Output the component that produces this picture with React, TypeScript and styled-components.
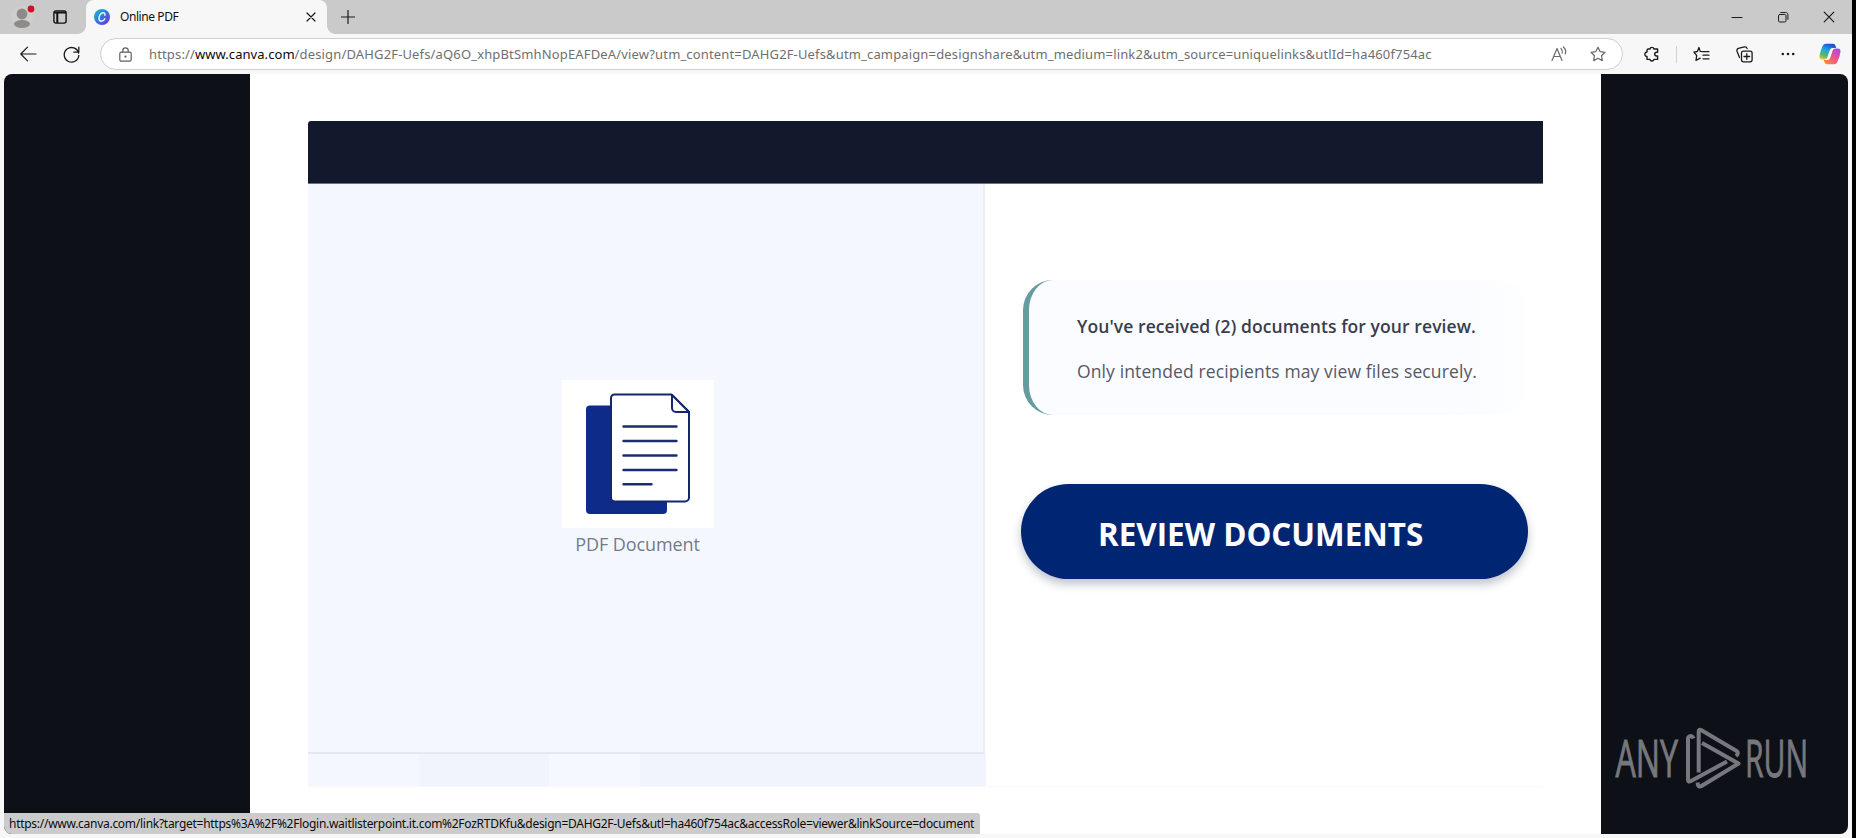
import React from "react";
import styled, { createGlobalStyle } from "styled-components";

const GlobalStyle = createGlobalStyle`
  * { box-sizing: border-box; }
  body { margin: 0; background: #000; overflow: hidden; font-family: "Noto Sans", "Open Sans", sans-serif; }
  svg { display: block; flex: none; }
`;

const Desktop = styled.div`
  width: 1856px;
  height: 838px;
  background: #000;
`;

const Window = styled.div`
  width: 1852px;
  height: 838px;
  display: flex;
  flex-direction: column;
  background: #f7f7f7;
`;

const TabStrip = styled.header`
  height: 34px;
  flex: none;
  display: flex;
  align-items: center;
  background: #cacaca;
  padding: 0 17px 0 11px;
`;

const Profile = styled.button`
  border: 0;
  padding: 0;
  background: none;
  width: 42px;
  height: 34px;
  display: flex;
  align-items: center;
`;

const Tab = styled.div`
  position: relative;
  display: flex;
  align-items: center;
  width: 241px;
  height: 34px;
  margin-left: 19px;
  padding: 0 10px 0 8px;
  background: #f7f7f7;
  border-radius: 8px 8px 0 0;
  &::before, &::after {
    content: "";
    position: absolute;
    bottom: 0;
    width: 8px;
    height: 8px;
  }
  &::before { left: -8px; background: radial-gradient(circle at 0 0, #cacaca 7.5px, #f7f7f7 8px); }
  &::after { right: -8px; background: radial-gradient(circle at 100% 0, #cacaca 7.5px, #f7f7f7 8px); }
`;

const TabTitle = styled.span`
  flex: 1;
  margin-left: 10px;
  font-size: 12px;
  letter-spacing: -0.42px;
  color: #111;
  line-height: 16px;
`;

const NewTab = styled.div`
  margin-left: 14px;
`;

const WindowControls = styled.div`
  margin-left: auto;
  display: flex;
  align-items: center;
  gap: 34px;
`;

const Toolbar = styled.div`
  height: 40px;
  flex: none;
  display: flex;
  align-items: center;
  padding: 0 11px 0 20px;
`;

const AddressBar = styled.div`
  display: flex;
  align-items: center;
  width: 1524px;
  height: 32px;
  margin-left: 20px;
  padding: 0 16px 0 18px;
  background: #fff;
  border: 1px solid #cfcfcf;
  border-radius: 16px;
`;

const Url = styled.div`
  flex: 1;
  margin-left: 17px;
  font-size: 13px;
  line-height: 18px;
  letter-spacing: 0.15px;
  white-space: nowrap;
  color: #6f6f6f;
`;

const Host = styled.span`
  color: #0a0a0a;
  letter-spacing: 0.06px;
`;

const Gap = styled.div<{ $w: number }>`
  flex: none;
  width: ${(p) => p.$w}px;
`;

const Divider = styled.div`
  width: 1px;
  height: 17px;
  margin: 0 16px;
  background: #d2d2d2;
`;

const Viewport = styled.main`
  position: relative;
  width: 1844px;
  height: 760px;
  margin-left: 4px;
  display: flex;
  background: #0e1017;
  border-radius: 8px;
  overflow: hidden;
`;

const Page = styled.section`
  width: 1351px;
  margin-left: 246px;
  padding: 47px 58px 0;
  background: #fff;
`;

const DocHeader = styled.div`
  height: 63px;
  background: #12192c;
  border-bottom: 1px solid #6e7280;
  border-top-left-radius: 3px;
`;

const DocBody = styled.div`
  display: flex;
  height: 603px;
  border-bottom: 1px solid #f8f8f8;
`;

const Preview = styled.div`
  width: 678px;
  display: flex;
  flex-direction: column;
`;

const PreviewPane = styled.div`
  width: 677px;
  height: 570px;
  display: flex;
  flex-direction: column;
  align-items: center;
  padding: 196px 16px 0 0;
  background: #f5f7fe;
  border-right: 2px solid #ecedf5;
  border-bottom: 2px solid #e6e8f1;
`;

const IconTile = styled.div`
  width: 152px;
  height: 148px;
  display: flex;
  align-items: center;
  justify-content: center;
  background: #fff;
`;

const FileLabel = styled.div`
  margin-top: 4px;
  font-family: "Open Sans", sans-serif;
  font-size: 18px;
  line-height: 24px;
  letter-spacing: -0.1px;
  white-space: nowrap;
  color: #757a8b;
`;

const PreviewFooter = styled.div`
  flex: 1;
  display: flex;
  background: #f1f4fc;
`;

const FooterCell = styled.div<{ $w: number; $tint: string }>`
  width: ${(p) => p.$w}px;
  background: ${(p) => p.$tint};
`;

const Side = styled.div`
  width: 557px;
  display: flex;
  flex-direction: column;
  align-items: flex-start;
  padding: 96px 0 0 37px;
`;

const Notice = styled.div`
  width: 504px;
  height: 135px;
  padding: 34px 0 0 48px;
  background: linear-gradient(90deg, #fafcff 85%, #fdfeff);
  border-left: 6px solid #669c9f;
  border-radius: 30px;
  font-family: "Open Sans", sans-serif;
`;

const NoticeLine = styled.p<{ $strong?: boolean }>`
  margin: 0 0 ${(p) => (p.$strong ? 20 : 0)}px;
  font-size: 17.5px;
  line-height: 25px;
  white-space: nowrap;
  font-weight: ${(p) => (p.$strong ? 600 : 400)};
  letter-spacing: ${(p) => (p.$strong ? 0.09 : 0.12)}px;
  color: ${(p) => (p.$strong ? "#3b3d4d" : "#555866")};
`;

const ReviewButton = styled.button`
  width: 507px;
  height: 95px;
  margin: 69px 0 0 -2px;
  padding: 4px 0 0 77px;
  display: flex;
  align-items: center;
  border: 0;
  border-radius: 48px;
  background: #002673;
  box-shadow: 0 5px 10px rgba(30, 40, 80, 0.28);
  color: #fff;
  font-family: "Open Sans", sans-serif;
  font-weight: 700;
  font-size: 33px;
`;

const ButtonText = styled.span`
  display: inline-block;
  white-space: nowrap;
  transform-origin: 0 50%;
  transform: scaleX(0.951);
`;

const Watermark = styled.div`
  position: absolute;
  right: 8px;
  bottom: 31px;
`;

const StatusBubble = styled.div`
  position: absolute;
  left: 0;
  bottom: 0;
  width: 976px;
  height: 21px;
  padding-left: 5px;
  background: #cbcbcb;
  border-top-right-radius: 3px;
  font-size: 12px;
  line-height: 22px;
  letter-spacing: -0.275px;
  white-space: nowrap;
  color: #0c0c0c;
`;

const Stroke = ({ w, h, color = "#1b1b1b", sw = 1.2, children }: { w: number; h: number; color?: string; sw?: number; children: React.ReactNode }) => (
  <svg width={w} height={h} viewBox={`0 0 ${w} ${h}`} fill="none" stroke={color} strokeWidth={sw} strokeLinecap="round" strokeLinejoin="round">
    {children}
  </svg>
);

const STAR = "M8 1.2 L10.1 5.6 L15 6.3 L11.5 9.7 L12.3 14.6 L8 12.3 L3.7 14.6 L4.5 9.7 L1 6.3 L5.9 5.6 Z";

export default function App() {
  return (
    <Desktop>
      <GlobalStyle />
      <Window>
        <TabStrip>
          <Profile aria-label="Profile">
            <svg width="26" height="26" viewBox="0 0 26 26">
              <circle cx="11" cy="13" r="11" fill="#d0cecd" />
              <circle cx="11" cy="10" r="5.4" fill="#8f8a87" />
              <ellipse cx="11" cy="20" rx="8" ry="4" fill="#8f8a87" />
              <circle cx="20" cy="5" r="3.4" fill="#cf1124" />
            </svg>
          </Profile>
          <Stroke w={14} h={14} color="#111" sw={1.4}>
            <rect x="0.9" y="0.9" width="12.2" height="12.2" rx="2" />
            <path d="M1 2.5H13M4.3 3V13" strokeWidth="2" strokeLinecap="butt" />
          </Stroke>
          <Tab>
            <svg width="16" height="16" viewBox="0 0 16 16">
              <defs>
                <linearGradient id="site" x1="0" y1="0.1" x2="0.9" y2="1">
                  <stop offset="0" stopColor="#14b9cf" />
                  <stop offset="0.5" stopColor="#3478dc" />
                  <stop offset="1" stopColor="#7a2be0" />
                </linearGradient>
              </defs>
              <circle cx="8" cy="8" r="8" fill="url(#site)" />
              <path d="M10.8 6.2C11.3 4.5 10.2 3.6 8.9 3.8C6.7 4.1 5 6.8 5 9.2C5 11 6 12.2 7.5 12.2C9 12.2 10.2 11.2 10.9 9.8" fill="none" stroke="#eefcff" strokeWidth="1.4" strokeLinecap="round" />
            </svg>
            <TabTitle>Online PDF</TabTitle>
            <Stroke w={12} h={12}>
              <path d="M2 2L10 10M10 2L2 10" />
            </Stroke>
          </Tab>
          <NewTab>
            <Stroke w={14} h={14}>
              <path d="M7 0.5V13.5M0.5 7H13.5" />
            </Stroke>
          </NewTab>
          <WindowControls>
            <Stroke w={12} h={12}>
              <path d="M1 6.5H11" strokeWidth="1" />
            </Stroke>
            <Stroke w={12} h={12} sw={1}>
              <rect x="1.5" y="3.5" width="7.5" height="7.5" rx="1.2" />
              <path d="M3.8 1.5H8.7C10 1.5 10.9 2.3 10.9 3.6V8.4" />
            </Stroke>
            <Stroke w={12} h={12}>
              <path d="M1.2 1.2L10.8 10.8M10.8 1.2L1.2 10.8" />
            </Stroke>
          </WindowControls>
        </TabStrip>

        <Toolbar>
          <Stroke w={17} h={16}>
            <path d="M16 8H1M7.5 1.2L0.8 8L7.5 14.8" />
          </Stroke>
          <Gap $w={26} />
          <Stroke w={17} h={17} sw={1.3}>
            <path d="M15.6 7A7.3 7.3 0 1 0 15.8 9.5M15.8 1.2V6.2H10.8" />
          </Stroke>
          <AddressBar>
            <Stroke w={13} h={15} color="#5e5e5e">
              <rect x="0.8" y="5.2" width="11.4" height="9" rx="1.5" />
              <path d="M3.8 5V3.6A2.7 2.7 0 0 1 9.2 3.6V5" />
              <circle cx="6.5" cy="9.6" r="0.5" fill="#5e5e5e" />
            </Stroke>
            <Url>
              https://<Host>www.canva.com</Host>
              /design/DAHG2F-Uefs/aQ6O_xhpBtSmhNopEAFDeA/view?utm_content=DAHG2F-Uefs&amp;utm_campaign=designshare&amp;utm_medium=link2&amp;utm_source=uniquelinks&amp;utlId=ha460f754ac
            </Url>
            <Stroke w={17} h={16} color="#6a6a6a">
              <path d="M1 14.5L6 2.5L11 14.5M2.7 10.5H9.3M10 2.5Q12 4.5 11.2 7.2M12.4 1Q15.8 4 14.2 8" />
            </Stroke>
            <Gap $w={22} />
            <Stroke w={16} h={16} color="#6a6a6a">
              <path d={STAR} />
            </Stroke>
          </AddressBar>
          <Gap $w={21} />
          <Stroke w={16} h={16} sw={1.4}>
            <path d="M4.4 3H5.9A2.1 2.1 0 0 1 10 3H13.6V6.2H12.6A1.9 1.9 0 0 0 12.6 10H13.6V13.4H10A2.1 2.1 0 0 1 5.9 13.4H3V10.4A2.2 2.2 0 0 1 3 6V4.4Q3 3 4.4 3Z" />
          </Stroke>
          <Divider />
          <Stroke w={17} h={16} sw={1.3}>
            <path d="M10 5.6L7.2 5.4L5.9 1.4L4.4 5.5L0.9 6.2L3.7 9.5L3 14.3L7.2 12.2M10 5.6H16M10 9.2H16M10 12.8H16" />
          </Stroke>
          <Gap $w={26} />
          <Stroke w={17} h={17} sw={1.3}>
            <rect x="5.5" y="5.2" width="10.6" height="10.6" rx="2" />
            <path d="M10.8 7.7V13.3M8 10.5H13.6M3.5 11.5L1 5.2Q0.5 3.2 2.3 2.3L8.4 0.9Q10.5 0.6 11.2 2.6" />
          </Stroke>
          <Gap $w={28} />
          <svg width="14" height="4" viewBox="0 0 14 4" fill="#1b1b1b">
            <circle cx="1.8" cy="2" r="1.3" />
            <circle cx="7" cy="2" r="1.3" />
            <circle cx="12.2" cy="2" r="1.3" />
          </svg>
          <Gap $w={24} />
          <svg width="22" height="22" viewBox="0 0 22 22">
            <defs>
              <linearGradient id="coolSide" x1="0.6" y1="0" x2="0.2" y2="1">
                <stop offset="0" stopColor="#1b4fd0" />
                <stop offset="0.4" stopColor="#22a4e0" />
                <stop offset="0.75" stopColor="#59b96a" />
                <stop offset="1" stopColor="#e6c52c" />
              </linearGradient>
              <linearGradient id="warmSide" x1="0.9" y1="0" x2="0.2" y2="1">
                <stop offset="0" stopColor="#a24be8" />
                <stop offset="0.5" stopColor="#ee4f93" />
                <stop offset="1" stopColor="#fb8a3c" />
              </linearGradient>
            </defs>
            <path d="M7 0.8H14Q16 0.8 16.6 3L17.2 5H13.5Q11.5 5 10.8 7L8.5 14Q7.8 16.4 5.5 16.4H3.2Q0 16.4 0.6 12.5Q1.5 7.5 3.6 3Q4.6 0.8 7 0.8Z" fill="url(#coolSide)" />
            <path d="M15 21.2H8Q6 21.2 5.4 19L4.8 17H8.5Q10.5 17 11.2 15L13.5 8Q14.2 5.6 16.5 5.6H18.8Q22 5.6 21.4 9.5Q20.5 14.5 18.4 19Q17.4 21.2 15 21.2Z" fill="url(#warmSide)" />
          </svg>
        </Toolbar>

        <Viewport>
          <Page>
            <DocHeader />
            <DocBody>
              <Preview>
                <PreviewPane>
                  <IconTile>
                    <svg width="106" height="122" viewBox="0 0 106 122">
                      <rect x="1" y="12.5" width="81" height="108.5" rx="4" fill="#0f2b8a" />
                      <path d="M29.5 1.5H86.5L104 19V104.5A4 4 0 0 1 100 108.5H30A4 4 0 0 1 26 104.5V5A3.5 3.5 0 0 1 29.5 1.5Z" fill="#fff" stroke="#14266c" strokeWidth="2" />
                      <path d="M87 2V15A4 4 0 0 0 91 19H104Z" fill="#fff" stroke="#14266c" strokeWidth="2" strokeLinejoin="round" />
                      <path d="M38.5 33.5H91.5M38.5 48H91.5M38.5 62.5H91.5M38.5 77H91.5M38.5 91.3H66.5" stroke="#1d2c70" strokeWidth="2.4" strokeLinecap="round" />
                    </svg>
                  </IconTile>
                  <FileLabel>PDF Document</FileLabel>
                </PreviewPane>
                <PreviewFooter>
                  <FooterCell $w={111} $tint="#f5f7fe" />
                  <FooterCell $w={130} $tint="#f1f4fc" />
                  <FooterCell $w={91} $tint="#f5f8fe" />
                </PreviewFooter>
              </Preview>
              <Side>
                <Notice>
                  <NoticeLine $strong>You've received (2) documents for your review.</NoticeLine>
                  <NoticeLine>Only intended recipients may view files securely.</NoticeLine>
                </Notice>
                <ReviewButton>
                  <ButtonText>REVIEW DOCUMENTS</ButtonText>
                </ReviewButton>
              </Side>
            </DocBody>
          </Page>
          <Watermark>
            <svg width="226" height="90" viewBox="0 -10 226 90">
              <g fill="#77787e" stroke="#77787e" strokeWidth="0.9" fontFamily="'Open Sans', sans-serif" fontWeight="400" fontSize="51.5">
                <text transform="translate(1.5 54) scale(0.62 1)" textLength="101" lengthAdjust="spacingAndGlyphs">ANY</text>
                <text transform="translate(131 54) scale(0.62 1)" textLength="102" lengthAdjust="spacingAndGlyphs">RUN</text>
              </g>
              <g fill="none" stroke="#77787e" strokeWidth="4" strokeLinejoin="round">
                <path d="M79.5 15.5Q78 12 75.5 13.5Q74 14 74 16V57Q74 59.5 77 58L113 38.5" />
                <path d="M84.7 49.5V8.5Q84.7 5.8 87.5 7.2L123 28.2Q125 30.5 122 33" />
                <path d="M88 20L124.5 40.5L87.5 63Q84 65 83.5 59.5" />
              </g>
            </svg>
          </Watermark>
          <StatusBubble>
            https://www.canva.com/link?target=https%3A%2F%2Flogin.waitlisterpoint.it.com%2FozRTDKfu&amp;design=DAHG2F-Uefs&amp;utl=ha460f754ac&amp;accessRole=viewer&amp;linkSource=document
          </StatusBubble>
        </Viewport>
      </Window>
    </Desktop>
  );
}
